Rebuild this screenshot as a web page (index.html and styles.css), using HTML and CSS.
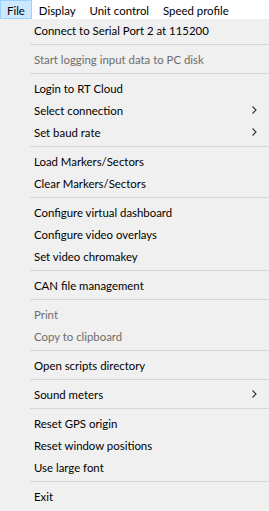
FILE: index.html
```html
<!DOCTYPE html>
<html lang="en">
<head>
    <meta charset="UTF-8">
    <title>File menu</title>
    <link rel="stylesheet" href="styles.css">
</head>
<body>
    <div class="menubar">
        <span class="menu-title active">File</span>
        <span class="menu-title">Display</span>
        <span class="menu-title">Unit control</span>
        <span class="menu-title">Speed profile</span>
    </div>

    <ul class="menu">
        <li class="item">Connect to Serial Port 2 at 115200</li>
        <li class="sep"></li>
        <li class="item disabled">Start logging input data to PC disk</li>
        <li class="sep"></li>
        <li class="item">Login to RT Cloud</li>
        <li class="item sub">Select connection
            <svg class="arrow" width="5" height="8" viewBox="0 0 5 8"><polyline points="0.5,0.5 4,4 0.5,7.5" fill="none" stroke="#333" stroke-width="1.1"/></svg>
        </li>
        <li class="item sub">Set baud rate
            <svg class="arrow" width="5" height="8" viewBox="0 0 5 8"><polyline points="0.5,0.5 4,4 0.5,7.5" fill="none" stroke="#333" stroke-width="1.1"/></svg>
        </li>
        <li class="sep"></li>
        <li class="item">Load Markers/Sectors</li>
        <li class="item">Clear Markers/Sectors</li>
        <li class="sep"></li>
        <li class="item">Configure virtual dashboard</li>
        <li class="item">Configure video overlays</li>
        <li class="item">Set video chromakey</li>
        <li class="sep"></li>
        <li class="item">CAN file management</li>
        <li class="sep"></li>
        <li class="item disabled">Print</li>
        <li class="item disabled">Copy to clipboard</li>
        <li class="sep"></li>
        <li class="item">Open scripts directory</li>
        <li class="sep"></li>
        <li class="item sub">Sound meters
            <svg class="arrow" width="5" height="8" viewBox="0 0 5 8"><polyline points="0.5,0.5 4,4 0.5,7.5" fill="none" stroke="#333" stroke-width="1.1"/></svg>
        </li>
        <li class="sep"></li>
        <li class="item">Reset GPS origin</li>
        <li class="item">Reset window positions</li>
        <li class="item">Use large font</li>
        <li class="sep"></li>
        <li class="item">Exit</li>
    </ul>
</body>
</html>
```

FILE: styles.css
```css
* {
    margin: 0;
    padding: 0;
    box-sizing: border-box;
}

body {
    background: #f0f0f0;
    font-family: "Segoe UI", Lato, "Noto Sans", sans-serif;
    font-size: 11.4px;
    color: #000;
    height: 511px;
    overflow: hidden;
}

.menubar {
    display: flex;
    height: 19px;
    background: #fff;
}

.menu-title {
    display: flex;
    align-items: center;
    padding: 1px 6px 0;
    height: 19px;
    border: 1px solid transparent;
}

.menu-title.active {
    background: #cce8ff;
    border-color: #99d1ff;
}

.menu {
    list-style: none;
    background: #f0f0f0;
}

.item {
    display: flex;
    align-items: center;
    justify-content: space-between;
    height: 22px;
    padding: 1px 12px 0 34px;
}

.item.disabled {
    color: #6d6d6d;
}

.sep {
    height: 7px;
    margin-left: 30px;
    padding-top: 3px;
}

.sep::before {
    content: "";
    display: block;
    height: 1px;
    background: #d7d7d7;
}

.arrow {
    display: block;
    margin-top: -1px;
}
```
